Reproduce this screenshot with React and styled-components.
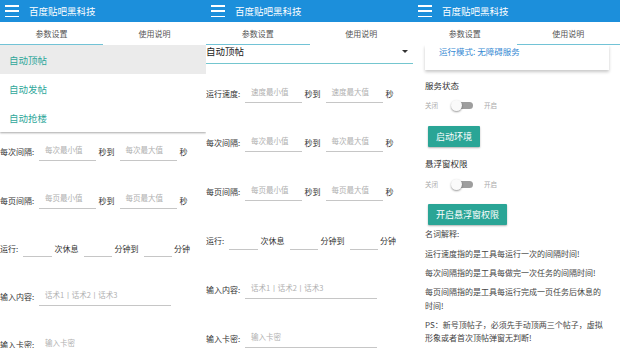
import React from 'react'
import styled, { createGlobalStyle } from 'styled-components'

const GlobalStyle = createGlobalStyle`
  html, body {
    margin: 0;
    padding: 0;
    background: #fff;
  }
  body {
    font-family: "Noto Sans CJK SC", "Noto Sans", sans-serif;
  }
`

const Screen = styled.div`
  display: grid;
  grid-template-columns: 206px 207px 207px;
  width: 620px;
  height: 348px;
  overflow: hidden;
`

const Phone = styled.div`
  display: flex;
  flex-direction: column;
  height: 348px;
  overflow: hidden;
  background: #fff;
`

const AppBar = styled.header`
  flex: none;
  height: 22px;
  display: flex;
  align-items: center;
  gap: 10px;
  padding-left: 5px;
  background: #1c8fdb;
  color: #fff;
`

const Burger = styled.span`
  width: 14px;
  height: 12px;
  display: flex;
  flex-direction: column;
  justify-content: space-between;

  i {
    display: block;
    height: 1.5px;
    background: #fff;
  }
`

const Title = styled.span`
  font-size: 9.5px;
  line-height: 12px;
`

const TabBar = styled.nav`
  flex: none;
  height: 23px;
  display: grid;
  grid-template-columns: 1fr 1fr;
  background: #fff;
`

const Tab = styled.div`
  display: flex;
  align-items: center;
  justify-content: center;
  font-size: 8px;
  color: #555;
  border-bottom: 1.5px solid ${p => (p.$active ? '#72c3d6' : 'transparent')};
`

const Body = styled.div`
  position: relative;
  flex: 1;
  overflow: hidden;
`

// open dropdown of the mode spinner, lies over the form
const Menu = styled.ul`
  position: absolute;
  top: 0;
  left: 0;
  right: 0;
  z-index: 2;
  margin: 0;
  padding: 0;
  list-style: none;
  background: #fff;
  box-shadow: 0 1px 2px rgba(0, 0, 0, 0.35);
`

const MenuItem = styled.li`
  height: 29px;
  display: flex;
  align-items: center;
  padding-left: 9px;
  font-size: 9.5px;
  color: #2ea79a;
  background: ${p => (p.$active ? '#ebebeb' : '#fff')};
`

const Spinner = styled.div`
  height: 18px;
  display: flex;
  align-items: flex-start;
  justify-content: space-between;
  padding-right: 5px;
  border-bottom: 1.5px solid #74c6cf;
  font-size: 9.5px;
  line-height: 13px;
  color: #222;
`

const Caret = styled.span`
  margin-top: 5px;
  width: 0;
  height: 0;
  border-left: 3px solid transparent;
  border-right: 3px solid transparent;
  border-top: 3.5px solid #333;
`

const Form = styled.div`
  padding-top: ${p => p.$top}px;
`

const Row = styled.div`
  height: ${p => p.$pitch}px;
  display: flex;
  align-items: center;
  font-size: 8px;
  color: #333;
`

const Label = styled.span`
  flex: none;
  width: ${p => p.$w || 39}px;
  white-space: nowrap;
`

const Field = styled.div`
  flex: none;
  box-sizing: border-box;
  width: ${p => p.$w}px;
  height: 18px;
  padding: 1px 0 0 6px;
  border-bottom: 1px solid #c6c6c6;
  font-size: 7.5px;
  line-height: 12px;
  color: #b0b0b0;
  white-space: nowrap;
`

const Unit = styled.span`
  flex: none;
  margin: 0 5px 0 ${p => p.$ml || 2.5}px;
  white-space: nowrap;
`

const Column = styled.div`
  display: flex;
  flex-direction: column;
  align-items: flex-start;
  padding: 0 11px 0 12px;
`

const Card = styled.div`
  align-self: stretch;
  padding: 0 14px 13px;
  background: #fff;
  box-shadow: 0 2px 3px rgba(0, 0, 0, 0.22);
  font-size: 8.5px;
  line-height: 12px;
  color: #3689d3;
`

const Heading = styled.div`
  margin-top: ${p => p.$mt}px;
  font-size: 8.5px;
  line-height: 12px;
  color: #333;
`

const ToggleRow = styled.div`
  margin-top: ${p => p.$mt}px;
  height: 14px;
  display: flex;
  align-items: center;
  font-size: 6.5px;
  color: #aaa;
`

const Switch = styled.span`
  position: relative;
  width: 22px;
  height: 11px;
  margin: 0 11px 0 13px;

  &::before {
    content: '';
    position: absolute;
    left: 5px;
    right: 0;
    top: 2px;
    height: 7px;
    border-radius: 4px;
    background: #9e9e9e;
  }

  &::after {
    content: '';
    position: absolute;
    left: 0;
    top: 0;
    width: 11px;
    height: 11px;
    border-radius: 50%;
    background: #fafafa;
    box-shadow: 0 1px 2px rgba(0, 0, 0, 0.4);
  }
`

const Button = styled.button`
  margin: ${p => p.$mt}px 0 0 3px;
  height: 21px;
  padding: 0 8px;
  border: none;
  border-radius: 1px;
  background: #2aa596;
  color: #fff;
  font-family: inherit;
  font-size: 9px;
  box-shadow: 0 1px 2px rgba(0, 0, 0, 0.3);
`

const Para = styled.p`
  margin: ${p => p.$mt ?? 5.5}px 0 0;
  width: 181px;
  font-size: 8px;
  line-height: 13.5px;
  color: #444;
`

const Header = ({ active }) => (
  <>
    <AppBar>
      <Burger>
        <i />
        <i />
        <i />
      </Burger>
      <Title>百度贴吧黑科技</Title>
    </AppBar>
    <TabBar>
      <Tab $active={active === 0}>参数设置</Tab>
      <Tab $active={active === 1}>使用说明</Tab>
    </TabBar>
  </>
)

const RangeRow = ({ pitch, label, min, max }) => (
  <Row $pitch={pitch}>
    <Label>{label}</Label>
    <Field $w={57}>{min}</Field>
    <Unit>秒到</Unit>
    <Field $w={57}>{max}</Field>
    <Unit $ml={3}>秒</Unit>
  </Row>
)

const Settings = ({ top, pitch, skipSpeed }) => (
  <Form $top={top}>
    {!skipSpeed && (
      <RangeRow pitch={pitch} label="运行速度:" min="速度最小值" max="速度最大值" />
    )}
    <RangeRow pitch={pitch} label="每次间隔:" min="每次最小值" max="每次最大值" />
    <RangeRow pitch={pitch} label="每页间隔:" min="每页最小值" max="每页最大值" />
    <Row $pitch={pitch}>
      <Label $w={23}>运行:</Label>
      <Field $w={29} />
      <Unit>次休息</Unit>
      <Field $w={28} />
      <Unit $ml={3}>分钟到</Unit>
      <Field $w={28} />
      <Unit>分钟</Unit>
    </Row>
    <Row $pitch={pitch}>
      <Label>输入内容:</Label>
      <Field $w={132}>话术1丨话术2丨话术3</Field>
    </Row>
    <Row $pitch={pitch}>
      <Label>输入卡密:</Label>
      <Field $w={132}>输入卡密</Field>
    </Row>
  </Form>
)

const modes = ['自动顶帖', '自动发帖', '自动抢楼']

export default function App() {
  return (
    <>
      <GlobalStyle />
      <Screen>
        <Phone>
          <Header active={0} />
          <Body>
            <Menu>
              {modes.map((m, i) => (
                <MenuItem key={m} $active={i === 0}>
                  {m}
                </MenuItem>
              ))}
            </Menu>
            {/* spinner and speed row sit under the open menu */}
            <Settings top={82.75} pitch={48.25} skipSpeed />
          </Body>
        </Phone>

        <Phone>
          <Header active={0} />
          <Body>
            <Spinner>
              自动顶帖
              <Caret />
            </Spinner>
            <Settings top={5} pitch={49} />
          </Body>
        </Phone>

        <Phone>
          <Header active={1} />
          <Body>
            <Column>
              <Card>运行模式: 无障碍服务</Card>
              <Heading $mt={9}>服务状态</Heading>
              <ToggleRow $mt={7}>
                关闭
                <Switch />
                开启
              </ToggleRow>
              <Button $mt={14}>启动环境</Button>
              <Heading $mt={10}>悬浮窗权限</Heading>
              <ToggleRow $mt={8}>
                关闭
                <Switch />
                开启
              </ToggleRow>
              <Button $mt={13}>开启悬浮窗权限</Button>
              <Para $mt={2}>名词解释:</Para>
              <Para $mt={6.5}>运行速度指的是工具每运行一次的间隔时间!</Para>
              <Para>每次间隔指的是工具每做完一次任务的间隔时间!</Para>
              <Para>每页间隔指的是工具每运行完成一页任务后休息的时间!</Para>
              <Para>PS：新号顶帖子，必须先手动顶两三个帖子，虚拟形象或者首次顶帖弹窗无判断!</Para>
            </Column>
          </Body>
        </Phone>
      </Screen>
    </>
  )
}
